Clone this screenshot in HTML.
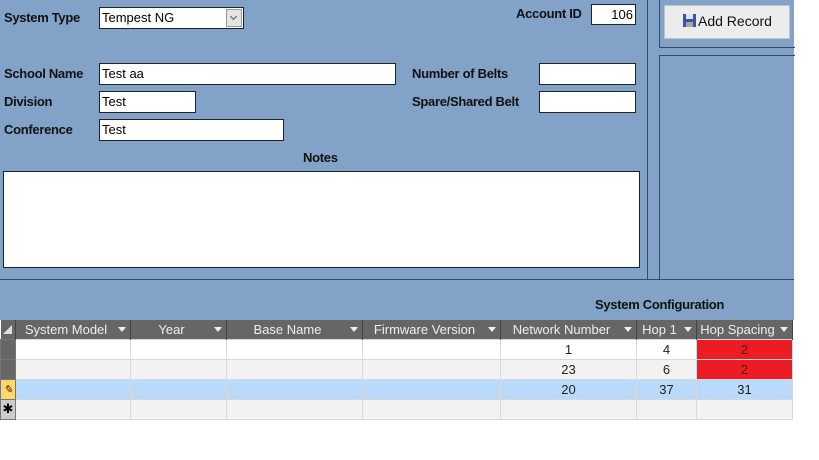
<!DOCTYPE html>
<html><head><style>
*{margin:0;padding:0;box-sizing:border-box}
body{width:819px;height:460px;background:#fff;position:relative;overflow:hidden;font-family:"Liberation Sans",sans-serif}
.bg{position:absolute;left:0;top:0;width:794px;height:320px;background:#82a3c7}
.a{position:absolute}
.lbl{position:absolute;font-size:13px;font-weight:bold;color:#111;letter-spacing:-0.3px}
.box{position:absolute;background:#fff;border:1px solid #222;font-size:13px;padding:2px 0 0 2px;color:#000}
table{position:absolute;left:0;top:320px;border-collapse:collapse;font-size:13px}
td{height:20px;border:1px solid #d8d8dc;padding:0;text-align:center;color:#222}
th{height:19px;background:#666;color:#eee;font-weight:normal;border-right:1px solid #444;text-align:center;position:relative;padding:0 14px 0 0;font-size:13px}
th:after{content:"";position:absolute;right:4px;top:7px;border-left:4px solid transparent;border-right:4px solid transparent;border-top:5px solid #eee}
th.s:after{display:none}
th.s{padding:0}
td.sel{background:#666;border-color:#777}
</style></head><body>
<div class="bg"></div>
<div class="a" style="left:647px;top:0;width:1px;height:280px;background:#3a4a5c"></div>
<div class="a" style="left:0;top:279px;width:794px;height:1px;background:#3a4a5c"></div>
<div class="a" style="left:659px;top:0;width:136px;height:48px;border:1px solid #3a4a5c;border-top:none;border-right:none"></div>
<div class="a" style="left:659px;top:55px;width:136px;height:225px;border:1px solid #3a4a5c;border-right:none;border-bottom:none"></div>
<div class="a" style="left:664px;top:5px;width:126px;height:34px;background:#ececec;border:1px solid #b8c4d0;font-size:14px;padding-top:7px;padding-left:18px;color:#111">
<span style="display:inline-block;width:13px;height:13px;background:#3c50b8;vertical-align:-1px;margin-right:2px;position:relative"><span style="position:absolute;left:3px;top:0;width:7px;height:5px;background:#dfe6f5"></span><span style="position:absolute;left:3px;top:8px;width:7px;height:5px;background:#9aa"></span></span>Add Record</div>

<div class="lbl" style="left:4px;top:10px">System Type</div>
<div class="box" style="left:99px;top:7px;width:145px;height:22px">Tempest NG<span style="position:absolute;right:1px;top:1px;width:16px;height:18px;background:#e4e4e4;border:1px solid #999"><span style="position:absolute;left:4px;top:4px;width:5px;height:5px;border-right:1.5px solid #555;border-bottom:1.5px solid #555;transform:rotate(45deg)"></span></span></div>
<div class="lbl" style="left:516px;top:6px">Account ID</div>
<div class="box" style="left:591px;top:4px;width:45px;height:21px;text-align:right;padding-right:2px">106</div>

<div class="lbl" style="left:4px;top:66px">School Name</div>
<div class="box" style="left:99px;top:63px;width:297px;height:22px">Test aa</div>
<div class="lbl" style="left:4px;top:94px">Division</div>
<div class="box" style="left:99px;top:91px;width:97px;height:22px">Test</div>
<div class="lbl" style="left:4px;top:122px">Conference</div>
<div class="box" style="left:99px;top:119px;width:185px;height:22px">Test</div>

<div class="lbl" style="left:412px;top:66px">Number of Belts</div>
<div class="box" style="left:539px;top:63px;width:97px;height:22px"></div>
<div class="lbl" style="left:412px;top:94px">Spare/Shared Belt</div>
<div class="box" style="left:539px;top:91px;width:97px;height:22px"></div>

<div class="lbl" style="left:303px;top:150px">Notes</div>
<div class="box" style="left:3px;top:171px;width:637px;height:97px"></div>
<div class="lbl" style="left:595px;top:297px">System Configuration</div>

<table>
<tr><th class="s" style="width:15px"><span style="display:inline-block;border-left:9px solid transparent;border-bottom:9px solid #ddd;margin-top:4px"></span></th><th style="width:115px">System Model</th><th style="width:96px">Year</th><th style="width:136px">Base Name</th><th style="width:138px">Firmware Version</th><th style="width:136px">Network Number</th><th style="width:60px">Hop 1</th><th style="width:96px">Hop Spacing</th></tr>
<tr style="background:#fff"><td class="sel"></td><td></td><td></td><td></td><td></td><td>1</td><td>4</td><td style="background:#ed1c24;color:#600">2</td></tr>
<tr style="background:#f2f2f2"><td class="sel"></td><td></td><td></td><td></td><td></td><td>23</td><td>6</td><td style="background:#ed1c24;color:#600">2</td></tr>
<tr style="background:#b9dbfb"><td class="sel" style="background:#fbd86a;color:#600;font-size:11px;font-style:italic">&#x270E;</td><td></td><td></td><td></td><td></td><td>20</td><td>37</td><td>31</td></tr>
<tr style="background:#f2f2f2"><td class="sel" style="background:#ccc;color:#000">&#x2731;</td><td></td><td></td><td></td><td></td><td></td><td></td><td></td></tr>
</table>
</body></html>
